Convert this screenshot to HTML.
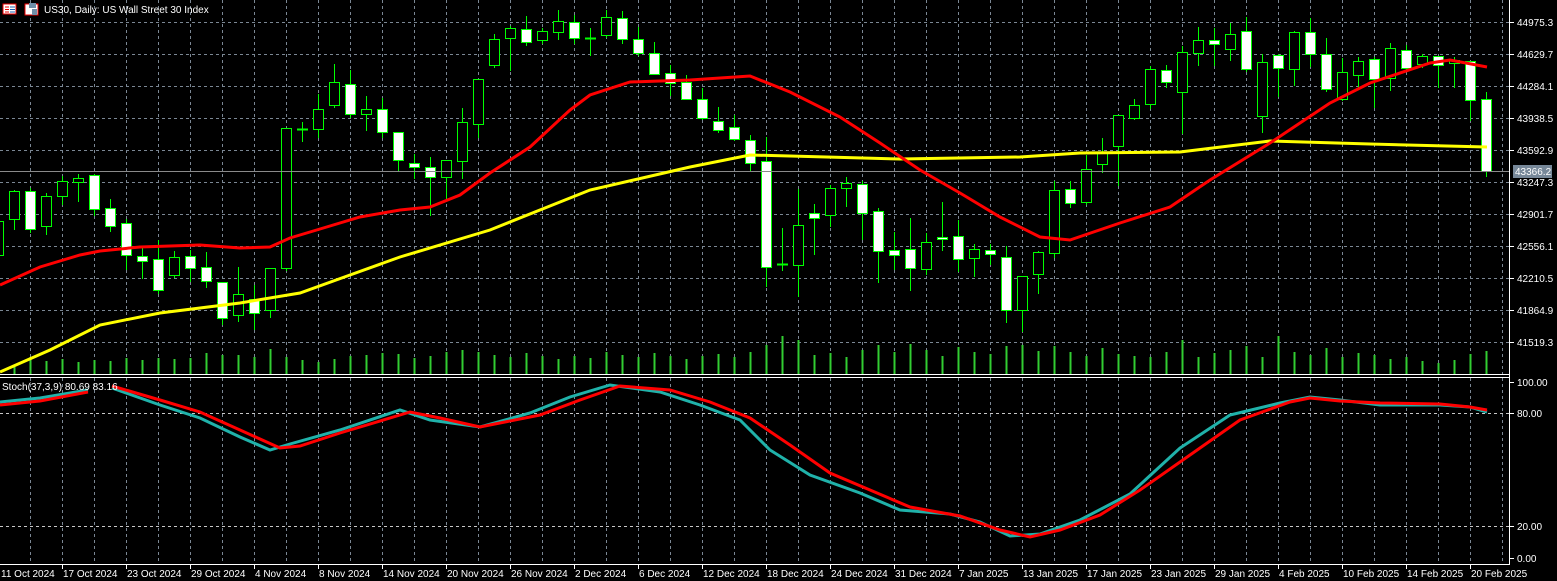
<!DOCTYPE html>
<html><head><meta charset="utf-8"><style>
html,body{margin:0;padding:0;background:#000;width:1557px;height:581px;overflow:hidden}
svg{display:block}
text{font-family:"Liberation Sans","DejaVu Sans",sans-serif;font-size:10px;fill:#fff}
</style></head><body>
<svg id="c" width="1557" height="581" xmlns="http://www.w3.org/2000/svg">
<rect width="1557" height="581" fill="#000"/>
<g id="grid"></g>
<g id="vol"></g>
<g id="cand"></g>
<line x1="0" y1="171.5" x2="1509" y2="171.5" stroke="#8a8a8a" stroke-width="1"/>
<polyline fill="none" stroke="#ffff00" stroke-width="3" points="0,372 50,350 100,325 160,313 240,303 300,293 350,275 400,257 490,230 590,190 690,167 750,155 790,156 900,159 1020,157 1080,153 1180,152 1270,141 1370,144 1487,147"/>
<polyline fill="none" stroke="#ff0000" stroke-width="3" points="0,285 40,267 80,255 100,251 140,247 200,245 240,248 270,247 290,238 320,229 360,217 400,210 430,207 460,195 490,173 530,147 570,110 590,95 630,82 690,80 750,76 790,92 840,117 880,143 920,170 960,193 1000,217 1040,237 1070,240 1120,223 1170,207 1210,180 1270,143 1330,103 1370,83 1430,63 1450,60 1487,67"/>
<polyline fill="none" stroke="#20b2aa" stroke-width="3" points="0,402 40,398 88,390"/>
<polyline fill="none" stroke="#ff0000" stroke-width="3" points="0,405 40,401 88,392"/>
<polyline fill="none" stroke="#20b2aa" stroke-width="3" points="112,388 160,405 200,418 240,437 270,450 290,444 340,430 400,410 430,420 480,427 530,413 570,397 610,385 660,392 700,405 740,420 770,450 810,475 860,493 900,510 950,514 980,522 1010,536 1040,534 1080,520 1130,494 1180,448 1230,415 1280,403 1310,397 1340,400 1380,405 1440,405 1470,407 1487,412"/>
<polyline fill="none" stroke="#ff0000" stroke-width="3" points="112,386 160,400 200,412 240,430 280,448 300,446 340,433 410,412 440,418 480,427 540,415 580,400 620,386 670,390 710,402 750,418 790,445 830,473 870,490 910,507 960,516 1000,530 1030,537 1060,530 1100,515 1140,490 1190,455 1240,420 1290,402 1310,398 1340,401 1380,403 1440,404 1470,407 1487,410"/>
<!-- separators / axes -->
<line x1="0" y1="374.5" x2="1510" y2="374.5" stroke="#fff"/>
<line x1="0" y1="377.5" x2="1510" y2="377.5" stroke="#fff"/>
<line x1="0" y1="564.5" x2="1510" y2="564.5" stroke="#fff"/>
<line x1="1509.5" y1="0" x2="1509.5" y2="565" stroke="#fff"/>
<g id="ticks"></g>
<!-- title -->
<rect x="3" y="4" width="13" height="10" fill="#fff" stroke="#e00" stroke-width="1"/>
<line x1="5" y1="7" x2="9" y2="7" stroke="#e00"/><line x1="5" y1="9.5" x2="9" y2="9.5" stroke="#e00"/><line x1="5" y1="12" x2="9" y2="12" stroke="#e00"/>
<line x1="10" y1="7" x2="15" y2="7" stroke="#1e60b0"/><line x1="10" y1="9.5" x2="15" y2="9.5" stroke="#1e60b0"/><line x1="10" y1="12" x2="15" y2="12" stroke="#1e60b0"/>
<rect x="25" y="4" width="13" height="11" fill="#fff" stroke="#e00"/>
<rect x="29" y="3" width="7" height="5" fill="#6f8fa8"/>
<rect x="32" y="9" width="5" height="6" fill="#6f8fa8"/>
<text x="44" y="13" font-size="11">US30, Daily:  US Wall Street 30 Index</text>
<text x="2" y="390">Stoch(37,3,9) 80.69 83.16</text>
<!-- price labels -->
<g>
<text x="1517" y="26">44975.3</text>
<text x="1517" y="58">44629.7</text>
<text x="1517" y="90">44284.1</text>
<text x="1517" y="122">43938.5</text>
<text x="1517" y="154">43592.9</text>
<text x="1517" y="186">43247.3</text>
<text x="1517" y="218">42901.7</text>
<text x="1517" y="250">42556.1</text>
<text x="1517" y="282">42210.5</text>
<text x="1517" y="314">41864.9</text>
<text x="1517" y="346">41519.3</text>
<rect x="1513" y="165" width="39" height="13" fill="#778899"/>
<text x="1515" y="175">43366.2</text>
<text x="1517" y="386">100.00</text>
<text x="1517" y="417">80.00</text>
<text x="1517" y="530">20.00</text>
<text x="1517" y="562">0.00</text>
</g>
<g>
<text x="1" y="577">11 Oct 2024</text>
<text x="63" y="577">17 Oct 2024</text>
<text x="127" y="577">23 Oct 2024</text>
<text x="191" y="577">29 Oct 2024</text>
<text x="255" y="577">4 Nov 2024</text>
<text x="319" y="577">8 Nov 2024</text>
<text x="383" y="577">14 Nov 2024</text>
<text x="447" y="577">20 Nov 2024</text>
<text x="511" y="577">26 Nov 2024</text>
<text x="575" y="577">2 Dec 2024</text>
<text x="639" y="577">6 Dec 2024</text>
<text x="703" y="577">12 Dec 2024</text>
<text x="767" y="577">18 Dec 2024</text>
<text x="831" y="577">24 Dec 2024</text>
<text x="895" y="577">31 Dec 2024</text>
<text x="959" y="577">7 Jan 2025</text>
<text x="1023" y="577">13 Jan 2025</text>
<text x="1087" y="577">17 Jan 2025</text>
<text x="1151" y="577">23 Jan 2025</text>
<text x="1215" y="577">29 Jan 2025</text>
<text x="1279" y="577">4 Feb 2025</text>
<text x="1343" y="577">10 Feb 2025</text>
<text x="1407" y="577">14 Feb 2025</text>
<text x="1471" y="577">20 Feb 2025</text>
</g>
</svg>
<script>
var NS="http://www.w3.org/2000/svg";
function el(p,t,a){var e=document.createElementNS(NS,t);for(var k in a)e.setAttribute(k,a[k]);p.appendChild(e);return e;}
var g=document.getElementById('grid');
for(var x=30;x<1509;x+=32){el(g,'line',{x1:x+.5,y1:0,x2:x+.5,y2:374,stroke:'#7b8794','stroke-dasharray':'3,3'});el(g,'line',{x1:x+.5,y1:378,x2:x+.5,y2:564,stroke:'#7b8794','stroke-dasharray':'3,3'});}
var ys=[22,54,86,118,150,182,214,246,278,310,342];
ys.forEach(function(y){el(g,'line',{x1:0,y1:y+.5,x2:1509,y2:y+.5,stroke:'#7b8794','stroke-dasharray':'3,3'});});
[413,526].forEach(function(y){el(g,'line',{x1:0,y1:y+.5,x2:1509,y2:y+.5,stroke:'#c8c8c8','stroke-dasharray':'3,3'});});
var t=document.getElementById('ticks');
ys.forEach(function(y){el(t,'line',{x1:1510,y1:y+.5,x2:1514,y2:y+.5,stroke:'#fff'});});
[382,413,526,558].forEach(function(y){el(t,'line',{x1:1510,y1:y+.5,x2:1514,y2:y+.5,stroke:'#fff'});});
for(var x=62;x<1509;x+=64){el(t,'line',{x1:x+.5,y1:565,x2:x+.5,y2:569,stroke:'#fff'});}
// candles: type(w=white bear,h=hollow bull,c=cross), bodyTop, bodyBot, high, low
var C=[['h',221,255,215,258],['h',191,219,190,230],['w',191,229,188,233],['h',196,226,193,235],['h',181,196,176,205],['h',178,182,174,202],['w',175,209,174,216],['w',208,226,199,232],['w',223,255,219,270],['w',256,261,248,279],['w',259,290,240,294],['h',257,275,251,278],['w',256,268,250,282],['w',267,281,252,288],['w',282,318,282,325],['h',294,315,267,322],['w',299,313,285,330],['h',268,310,268,318],['h',128,268,128,271],['c',129,130,122,142],['h',109,129,94,138],['h',82,105,64,108],['w',84,114,70,118],['h',109,114,96,131],['w',109,132,98,138],['w',132,160,132,171],['w',163,167,154,179],['w',167,177,157,216],['h',160,177,160,200],['h',122,161,108,179],['h',79,124,79,138],['h',39,65,34,68],['h',28,38,26,71],['w',29,42,16,46],['h',31,40,28,44],['h',21,32,10,40],['w',22,38,15,44],['c',38,38,28,56],['h',17,35,10,38],['w',18,39,11,44],['w',39,53,27,56],['w',53,74,42,75],['w',73,83,65,96],['w',82,99,75,100],['w',99,118,88,120],['w',121,130,107,133],['w',127,139,115,141],['w',140,163,135,172],['w',161,267,137,287],['c',264,264,228,271],['h',225,265,189,297],['w',213,218,204,255],['h',188,215,185,227],['h',183,188,177,207],['w',184,213,181,240],['w',211,251,208,283],['w',250,255,232,270],['w',249,268,218,291],['h',242,269,233,275],['w',237,239,202,251],['w',236,259,220,272],['h',249,258,244,277],['w',250,254,244,265],['w',257,310,246,323],['h',276,310,276,332],['h',252,274,251,294],['h',190,253,181,258],['w',189,203,181,208],['h',169,202,155,205],['h',153,164,138,173],['h',115,146,115,186],['h',105,118,99,120],['h',69,104,66,109],['w',70,82,65,88],['h',52,92,46,134],['h',40,53,27,66],['w',40,44,28,66],['h',34,49,23,61],['w',31,69,17,72],['h',62,116,54,133],['w',55,68,54,97],['h',32,69,31,86],['w',32,54,18,67],['w',54,89,38,92],['h',72,99,58,101],['h',61,75,57,89],['w',59,79,57,108],['h',48,78,43,91],['w',50,68,45,72],['h',56,64,54,68],['w',56,65,56,88],['h',60,63,57,88],['w',61,100,61,121],['w',99,171,92,177]];
var cg=document.getElementById('cand'),vg=document.getElementById('vol');
var V=[360,367,357,361,359,362,360,361,358,360,358,359,358,353,355,355,357,349,357,360,362,359,356,355,353,354,358,356,352,350,352,355,357,353,356,359,356,358,352,355,357,353,356,359,356,354,357,352,345,336,340,355,353,357,350,345,352,344,350,356,347,352,354,346,345,351,346,352,356,348,354,356,357,352,340,357,353,350,346,357,336,352,355,348,357,353,355,359,357,361,363,360,354,351];
C.forEach(function(c,i){var x=-2+16*i;
 el(vg,'line',{x1:x+.5,y1:V[i],x2:x+.5,y2:374,stroke:'#32cd32','stroke-width':2});
 el(cg,'line',{x1:x+.5,y1:c[3],x2:x+.5,y2:c[4],stroke:'#00ff00'});
 if(c[0]=='c'){el(cg,'line',{x1:x-5,y1:c[1]+.5,x2:x+6,y2:c[1]+.5,stroke:'#00ff00','stroke-width':2});}
 else el(cg,'rect',{x:x-4.5,y:c[1]+.5,width:10,height:Math.max(c[2]-c[1],2),fill:c[0]=='w'?'#fff':'#000',stroke:'#00ff00'});
});
</script>
</body></html>
